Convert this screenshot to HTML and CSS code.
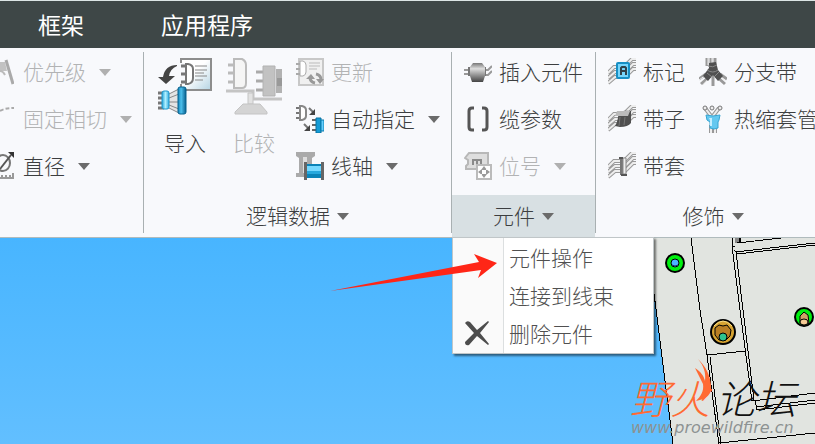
FILE: index.html
```html
<!DOCTYPE html>
<html lang="zh-CN">
<head>
  <meta charset="UTF-8">
  <meta name="viewport" content="width=device-width, initial-scale=1.0">
  <title>元件操作</title>
  <link rel="stylesheet" href="styles.css">
</head>
<body>
  <nav class="tabs">
    <a href="#frame">框架</a>
    <a href="#apps">应用程序</a>
  </nav>

  <div class="ribbon">
    <section class="group group-dim">
      <div class="group-body">
        <div class="column">
          <button class="tool" disabled>
            <svg class="icon-cut" viewBox="14 0 14 28"><path d="M14 4h5l2 9h-7" fill="#c2c2c2"/><path d="M20 2l7 24" stroke="#aaa" stroke-width="3"/><path d="M14 13q3 0 5 4" fill="none" stroke="#bbb" stroke-width="2"/></svg>
            <span>优先级</span><i class="caret"></i>
          </button>
          <button class="tool" disabled>
            <svg class="icon-cut" viewBox="14 0 14 28"><path d="M14 6q5-3 14-3" fill="none" stroke="#aaa" stroke-width="2" stroke-dasharray="4 2"/></svg>
            <span>固定相切</span><i class="caret"></i>
          </button>
          <button class="tool">
            <svg class="icon-cut" viewBox="14 0 14 28"><ellipse cx="17" cy="11" rx="7" ry="8" fill="none" stroke="#777" stroke-width="2"/><path d="M14 17L25 3" stroke="#555" stroke-width="2"/><path d="M22 0h6v6z" fill="#333"/><path d="M14 26h14M16 23v3M20 23v3M24 23v3M27 21v6" stroke="#999" stroke-width="2"/></svg>
            <span>直径</span><i class="caret"></i>
          </button>
        </div>
      </div>
    </section>
    <span class="divider"></span>

    <section class="group group-logic">
      <div class="group-body">
        <button class="tool-big">
          <svg width="54" height="57" viewBox="0 0 54 57">
            <defs>
              <linearGradient id="paper" x1="0" y1="0" x2="1" y2="1"><stop offset=".45" stop-color="#fff"/><stop offset="1" stop-color="#b4d3e2"/></linearGradient>
              <linearGradient id="cyan"><stop offset="0" stop-color="#28a4da"/><stop offset=".5" stop-color="#aeefff"/><stop offset="1" stop-color="#36ade0"/></linearGradient>
              <linearGradient id="blue"><stop offset="0" stop-color="#1483b8"/><stop offset=".4" stop-color="#4cc0ed"/><stop offset="1" stop-color="#075f8e"/></linearGradient>
            </defs>
            <path d="M23 1h30v31H23z" fill="url(#paper)" stroke="#8d8d8d" stroke-width="2"/>
            <path d="M21 5h7v21h-7z" fill="#f8f9fc"/>
            <path d="M23 8h5M23 16h5M23 24h5" stroke="#777" stroke-width="3"/>
            <path d="M28 6h2q5 1 5 5v9q0 5-5 6h-2z" fill="#fff" stroke="#777" stroke-width="2"/>
            <path d="M37 8h12M37 12h12M37 15h9M37 18h12M37 22h8" stroke="#888"/>
            <path d="M19 7Q7 7 5 19H0l8 7 9-8h-6q1-7 8-10z" fill="#444"/>
            <path d="M0 35h6M0 40h6M0 45h6M0 50h6" stroke="#777" stroke-width="3"/>
            <path d="M11 36l10-6v25l-10-5z" fill="#e4e4e4"/>
            <path d="M11 36l10-5M11 40l10-4M11 44h10M11 47l10 4M11 50l10 5" stroke="#888"/>
            <rect x="4" y="33" width="7" height="18" rx="2" fill="url(#cyan)" stroke="#1f97cc"/>
            <rect x="20" y="29" width="8" height="27" rx="2" fill="url(#blue)" stroke="#07628e"/>
          </svg>
          <span>导入</span>
        </button>
        <button class="tool-big" disabled>
          <svg width="56" height="57" viewBox="0 0 56 57">
            <path d="M2 7h7M2 15h7M2 24h7" stroke="#bbb" stroke-width="3"/>
            <path d="M8 1h8q4 2 4 6v18q0 5-4 5H8z" fill="#f5f5f5" stroke="#bbb" stroke-width="2"/>
            <path d="M30 14h9M30 23h9M30 32h9" stroke="#aaa" stroke-width="3"/>
            <path d="M37 8h12v30H37z" fill="#c2c2c2" stroke="#b2b2b2"/><path d="M50 11h6v24h-6z" fill="#b2b2b2"/><path d="M51 20h5v8h-5z" fill="#999"/>
            <path d="M0 33h27v8h29" fill="none" stroke="#c4c4c4" stroke-width="3"/>
            <path d="M22 35h5v11h-5z" fill="#e2e2e2" stroke="#c4c4c4"/>
            <path d="M17 46h17l7 8v2H9v-2z" fill="#d4d4d4" stroke="#c4c4c4"/>
          </svg>
          <span>比较</span>
        </button>
        <div class="column">
          <button class="tool" disabled>
            <svg class="icon" viewBox="0 0 28 28"><path d="M3 1h24v26H3z" fill="#f0f0f0" stroke="#c8c8c8" stroke-width="2"/><path d="M0 6h5M0 11h5M0 16h5" stroke="#aaa" stroke-width="2"/><path d="M4 3h3q3 1 3 4v7q0 3-3 4H4z" fill="#fff" stroke="#aaa"/><path d="M13 5h11M13 8h11M13 11h8" stroke="#bbb"/><path d="M14 19q0 5 5 6M25 22q0-5-5-6" fill="none" stroke="#999" stroke-width="3"/><path d="M10 21l5-5 4 5zM20 21h8l-4 5z" fill="#999"/></svg>
            <span>更新</span>
          </button>
          <button class="tool">
            <svg class="icon" viewBox="0 0 28 28"><path d="M0 3h5M0 8h5M0 13h5" stroke="#777" stroke-width="2"/><path d="M4 1h2q4 1 4 4v6q0 3-4 4H4z" fill="#fff" stroke="#888" stroke-width="2"/><path d="M13 3l4 4M8 19l4 4" stroke="#777" stroke-width="2"/><path d="M19 4v6h-6zM14 20v6H8z" fill="#444"/><path d="M16 15h5M16 20h5M16 25h5" stroke="#666" stroke-width="2"/><path d="M20 13h5v15h-5z" fill="#139bd6" stroke="#08719f"/><path d="M25 15h3v11h-3z" fill="#64cfff" stroke="#087bac"/></svg>
            <span>自动指定</span><i class="caret"></i>
          </button>
          <button class="tool">
            <svg class="icon" viewBox="0 0 28 28"><path d="M0 0h19v4l-3 2H3L0 4zM3 5h13v18H3zM0 21h11v4H0z" fill="#aaa"/><path d="M7 5h4v16H7z" fill="#ddd"/><path d="M8 10h3v18H8zM25 10h3v18h-3z" fill="#666"/><path d="M11 12h14v14H11z" fill="#0b83b8"/><path d="M11 14h14v5H11z" fill="#77d9ff"/><path d="M11 19h14v3H11z" fill="#27a8dd"/></svg>
            <span>线轴</span><i class="caret"></i>
          </button>
        </div>
      </div>
      <button class="group-label"><span>逻辑数据</span><i class="caret"></i></button>
    </section>
    <span class="divider"></span>

    <section class="group group-part">
      <div class="group-body">
        <div class="column">
          <button class="tool">
            <svg class="icon" viewBox="0 0 28 28"><defs><linearGradient id="metal" x1="0" y1="0" x2="0" y2="1"><stop offset="0" stop-color="#777"/><stop offset=".3" stop-color="#ddd"/><stop offset="1" stop-color="#444"/></linearGradient></defs><path d="M0 12h5M0 16h5M21 12h3l4-4M21 17h3l4-4" fill="none" stroke="#999" stroke-width="2"/><path d="M4 9h18v9H4z" fill="#777"/><path d="M9 5h9l3 4v9l-2 6H8l-2-6V9z" fill="url(#metal)"/></svg>
            <span>插入元件</span>
          </button>
          <button class="tool">
            <svg class="icon" viewBox="0 0 28 28"><path d="M10 3H8Q5 3 5 6v16q0 3 3 3h2M18 3h2q3 0 3 3v16q0 3-3 3h-2" fill="none" stroke="#555" stroke-width="3"/></svg>
            <span>缆参数</span>
          </button>
          <button class="tool" disabled>
            <svg class="icon" viewBox="0 0 28 28"><path d="M5 1h19v16H2v-3l2-2V8L1 6z" fill="#dedede" stroke="#b8b8b8" stroke-width="2"/><path d="M9 13V8h8v5M13 8v4" fill="none" stroke="#8a8a8a" stroke-width="2"/><path d="M13 13h14v14H13z" fill="#fff" stroke="#bbb" stroke-width="2"/><path d="M20 14l3 4h-6zM20 26l3-4h-6zM14 20l4-3v6zM26 20l-4-3v6z" fill="#999"/></svg>
            <span>位号</span><i class="caret"></i>
          </button>
        </div>
      </div>
      <button class="group-label open" aria-expanded="true"><span>元件</span><i class="caret"></i></button>

      <div class="menu">
        <button class="menu-item"><span class="menu-icon"></span><span>元件操作</span></button>
        <button class="menu-item"><span class="menu-icon"></span><span>连接到线束</span></button>
        <button class="menu-item">
          <span class="menu-icon"><svg width="26" height="26" viewBox="0 0 26 26"><path d="M0 3q2-3 5-1l7 8 11-9 1 1-9 11 9 11-1 1-11-9-8 9q-4 1-4-3l9-9z" fill="#4d4d4d"/></svg></span>
          <span>删除元件</span>
        </button>
      </div>
    </section>
    <span class="divider"></span>

    <section class="group group-cosmetic">
      <div class="group-body">
        <div class="column">
          <button class="tool">
            <svg class="icon" viewBox="0 0 28 28"><g id="wires" fill="none"><path d="M0 15l6-6h10l8-8h4M0 20l7-6h10l8-8h3M0 25l7-6h10l8-8h3" stroke="#999" stroke-width="4"/><path d="M0 15l6-6h10l8-8h4M0 20l7-6h10l8-8h3M0 25l7-6h10l8-8h3" stroke="#eee" stroke-width="2"/></g><rect x="9" y="5" width="12" height="15" rx="1" fill="#75d5fb" stroke="#178fc4" stroke-width="2"/><path d="M13 17v-7l1-1h3l1 1v7M13 13h5" fill="none" stroke="#31424a" stroke-width="2"/></svg>
            <span>标记</span>
          </button>
          <button class="tool">
            <svg class="icon" viewBox="0 0 28 28"><use href="#wires"/><path d="M10 7q7-2 13-1v12q-3 4-11 4l-5-1q4-7 3-14z" fill="#505050"/><path d="M9 6h13l-2 5H7z" fill="#bbb"/><path d="M12 12l-1 9M17 12l-1 8" stroke="#777"/></svg>
            <span>带子</span>
          </button>
          <button class="tool">
            <svg class="icon" viewBox="0 0 28 28"><use href="#wires"/><path d="M12 6h6v17h-6z" fill="#777"/><path d="M15 6h3v16h-3z" fill="#eee" stroke="#888"/><path d="M11 6h4M13 23h6" stroke="#555" stroke-width="2"/></svg>
            <span>带套</span>
          </button>
        </div>
        <div class="column">
          <button class="tool">
            <svg class="icon" viewBox="0 0 28 28"><path d="M8 0v8M12 0v8M16 0v8M0 21l7-5M2 26l9-8M28 21l-7-5M26 26l-9-8M14 17v11" stroke="#999" stroke-width="3"/><path d="M9 0v7M13 0v7M0 22l7-5M4 27l7-8M27 23l-7-5" stroke="#eee"/><path d="M10 5l7-1 2 8 5 6-5 5-5-6-5 6-5-5 6-8z" fill="#505050"/><path d="M9 8q5 2 9-1M8 12q6 4 11 0M8 15l5 4M20 14l-5 5" fill="none" stroke="#888"/></svg>
            <span>分支带</span>
          </button>
          <button class="tool">
            <svg class="icon" viewBox="0 0 28 28"><path d="M12 20v8M16 20v8M12 11L6 3M14 11l6-8" stroke="#999" stroke-width="4"/><path d="M12 20v8M16 20v8M12 11L6 3M14 11l6-8" stroke="#eee" stroke-width="2"/><circle cx="6" cy="3" r="2" fill="#eee" stroke="#777"/><circle cx="13" cy="3" r="2" fill="#eee" stroke="#777"/><circle cx="21" cy="3" r="2" fill="#eee" stroke="#777"/><path d="M7 10q7 2 14 0l-1 5-1 2v6q-4 2-8 0v-6l-3-2z" fill="#64c8f0" stroke="#36a5d3"/><path d="M10 13h3v8h-2v-6z" fill="#c6efff"/></svg>
            <span>热缩套管</span>
          </button>
        </div>
      </div>
      <button class="group-label"><span>修饰</span><i class="caret"></i></button>
    </section>
  </div>

  <main class="viewport">
    <svg class="model" viewBox="0 238 815 206" preserveAspectRatio="xMinYMin slice">
      <path d="M647 238h168v206H673z" fill="#e1e4e0"/>
      <path d="M735 238h5v5h-5z" fill="#888"/>
      <g fill="none" stroke="#000" shape-rendering="crispEdges">
        <path d="M647 238l26 206M691 238l9 72 7 45 12 89M732 238v8l8 64 12 91M734 250l2 2 7 58 11 90"/>
        <path d="M707 355l39-4M710 357l11 87M745 351l1 4"/>
        <path d="M732 246h3M737 243l44-5M735 252l80-9M737 254l78-9"/>
        <path d="M752 401l63-8M755 400l2 10 58-7M756 407l59-7M719 443l96-10"/>
        <path d="M740 238v5" stroke-width="2"/>
      </g>
      <g stroke="#000">
        <circle cx="675" cy="263" r="9" fill="#00f010" stroke-width="2"/><circle cx="675" cy="263" r="4" fill="#4cb5ff"/><path d="M672 265q3 2 6 0" fill="none" stroke="#236"/>
        <circle cx="804" cy="317" r="9" fill="#00f010" stroke-width="2"/><path d="M800 316l4-4 4 3 1 8-4 3-5-3z" fill="#d0a368"/><ellipse cx="804" cy="322" rx="4" ry="3" fill="#f5ca95"/>
        <circle cx="723" cy="332" r="12" fill="#d7a432" stroke-width="2"/><path d="M715 328l4-3 4 1 4-1 4 5-1 6-4 4h-7l-4-5z" fill="#b97f24"/><path d="M714 326q9-10 18 0" fill="none" stroke="#ffe38a"/><circle cx="723" cy="337" r="4" fill="#2dc38e"/>
      </g>
      <g class="brand"><text x="630" y="414" fill="#ff6a33">野火</text><text x="716" y="414" fill="#111">论坛</text></g>
      <path d="M698 359c8 8 12 16 13 26c1 9-4 14-15 16c5-5 8-10 7-17l-8-16c6 4 9 8 10 13c1-8-1-15-7-22z" fill="#ff6a33"/>
      <text class="site" x="631" y="433">www.proewildfire.cn</text>
    </svg>
  </main>

  <svg class="pointer" width="168" height="38" viewBox="330 253 168 38"><path d="M330 291l149-29-5-8 23 9-19 15 3-8z" fill="#ff2617"/></svg>
</body>
</html>
```
FILE: styles.css
```css
:root {
  --bar: #3e4747;
  --ribbon: #f8f9fc;
  --text: #3c3e40;
  --muted: #b2b3b4;
  --line: #a9b0b2;
}
* { box-sizing: border-box; }
body {
  margin: 0;
  min-height: 100vh;
  display: flex; flex-direction: column;
  position: relative;
  overflow: hidden;
  font-family: "Noto Sans CJK SC", sans-serif;
  font-size: 21px; font-weight: 300; line-height: 28px;
  color: var(--text);
  background: #4ab6ff;
}
button {
  margin: 0; padding: 0; border: 0;
  background: none; color: inherit; font: inherit;
  white-space: nowrap; cursor: pointer;
}
button:disabled { color: var(--muted); cursor: default; }
svg { display: block; flex: none; }

.tabs {
  height: 48px; padding: 0 38px 2px;
  display: flex; align-items: center; gap: 77px;
  background: var(--bar); border-top: 1px solid #dce5e5;
}
.tabs a { color: #fff; font-size: 23px; font-weight: 400; text-decoration: none; }

.ribbon {
  height: 190px;
  display: flex;
  background: var(--ribbon); border-bottom: 1px solid #b0bbbd;
}
.group { position: relative; display: flex; flex-direction: column; flex: none; }
.group-body { display: flex; gap: 14px; padding: 10px 12px 15px; }
.group-dim .group-body { padding-left: 0; padding-right: 11px; }
.group-logic .group-body { padding-left: 14px; padding-right: 11px; }
.divider { width: 1px; margin: 4px 0; background: var(--line); flex: none; }
.column { display: flex; flex-direction: column; align-items: flex-start; gap: 19px; }

.tool { display: flex; align-items: center; gap: 7px; height: 28px; }
.tool span, .group-label span { padding-bottom: 2px; }
.icon { width: 28px; height: 28px; }
.icon-cut { width: 14px; height: 28px; margin-right: 2px; }
.tool-big { display: flex; flex-direction: column; align-items: center; gap: 13px; align-self: flex-start; }

.caret {
  border: 6px solid transparent; border-top: 7px solid #6b6b6b; border-bottom: 0;
}
.tool .caret { margin-left: 6px; }
button:disabled .caret { border-top-color: #b0b0b0; }

.group-label {
  height: 42px;
  display: flex; align-items: center; justify-content: center; gap: 7px;
}
.group-label.open { background: #d8e0e3; }

.menu {
  position: absolute; top: 100%; left: 0; z-index: 2;
  width: 202px; padding-bottom: 1px;
  background: linear-gradient(to right, #fafafa 50px, #dcdfe0 50px, #dcdfe0 51px, #fff 51px);
  border: 1px solid #c0c6c8;
  box-shadow: 2px 2px 2px rgba(0, 0, 0, 0.5);
}
.menu-item { display: flex; align-items: center; gap: 7px; width: 100%; height: 38px; color: #505050; }
.menu-icon { width: 49px; display: flex; justify-content: center; }

.viewport { flex: 1; position: relative; min-height: 206px; background: linear-gradient(#48b5ff, #62bfff); }
.model { position: absolute; inset: 0; width: 100%; height: 100%; }
.brand { font-size: 40px; font-style: italic; }
.site { font: italic 16px "DejaVu Sans", sans-serif; fill: #8d9292; }

.pointer { position: absolute; left: 330px; top: 253px; z-index: 3; }
```
